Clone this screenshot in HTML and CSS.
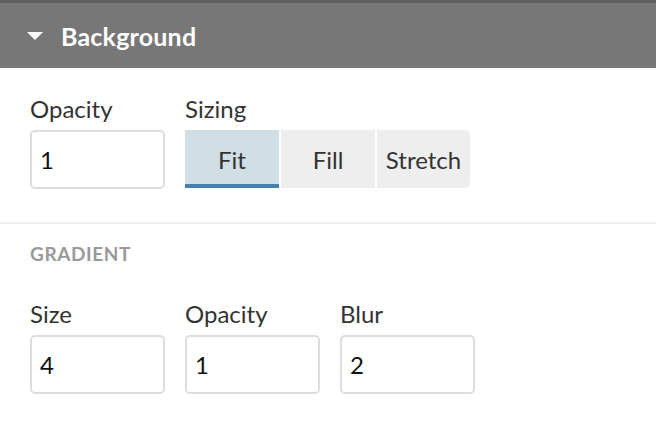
FILE: index.html
```html
<!DOCTYPE html>
<html>
<head>
<meta charset="utf-8">
<link rel="stylesheet" href="styles.css">
</head>
<body>
<div class="panel">
  <div class="header">
    <svg class="caret" width="16" height="8" viewBox="0 0 16 8"><polygon points="0,0 16,0 8,8" fill="#fff"/></svg>
    <span class="title">Background</span>
  </div>
  <div class="section first">
    <div class="row">
      <div class="field">
        <div class="label">Opacity</div>
        <div class="input">1</div>
      </div>
      <div class="field">
        <div class="label">Sizing</div>
        <div class="segments">
          <div class="seg active">Fit</div>
          <div class="seg">Fill</div>
          <div class="seg last">Stretch</div>
        </div>
      </div>
    </div>
  </div>
  <div class="section second">
    <div class="heading">GRADIENT</div>
    <div class="row">
      <div class="field">
        <div class="label">Size</div>
        <div class="input">4</div>
      </div>
      <div class="field">
        <div class="label">Opacity</div>
        <div class="input">1</div>
      </div>
      <div class="field">
        <div class="label">Blur</div>
        <div class="input">2</div>
      </div>
    </div>
  </div>
</div>
</body>
</html>
```
FILE: styles.css
```css
html, body {
  margin: 0;
  padding: 0;
  background: #fff;
}
body {
  font-family: Lato, "Liberation Sans", sans-serif;
  color: #333;
  width: 656px;
  height: 426px;
  overflow: hidden;
}
.header {
  height: 65px;
  border-top: 3px solid #606060;
  background: #777777;
  display: flex;
  align-items: center;
  padding-left: 27px;
  gap: 18px;
}
.caret {
  display: block;
  margin-top: 1px;
}
.title {
  color: #fff;
  font-weight: 700;
  font-size: 25px;
  letter-spacing: 0.2px;
}
.section {
  padding: 0 30px;
}
.section.first {
  padding-top: 26px;
  padding-bottom: 33px;
  border-bottom: 2px solid #eeeeee;
}
.section.second {
  padding-top: 18px;
}
.heading {
  font-size: 19px;
  font-weight: 700;
  color: #999;
  letter-spacing: 0.6px;
  line-height: 24px;
  margin-bottom: 33px;
}
.row {
  display: flex;
  gap: 20px;
}
.field {
  display: flex;
  flex-direction: column;
}
.label {
  font-size: 24px;
  line-height: 30px;
  margin-bottom: 6px;
  color: #333;
}
.input {
  box-sizing: border-box;
  width: 135px;
  height: 59px;
  border: 2px solid #dddddd;
  border-radius: 5px;
  font-size: 24px;
  line-height: 55px;
  padding-left: 8px;
  color: #111;
}
.segments {
  display: flex;
  gap: 2px;
  height: 58px;
}
.seg {
  box-sizing: border-box;
  width: 94px;
  background: #eeeeee;
  font-size: 24px;
  display: flex;
  align-items: center;
  justify-content: center;
  color: #333;
}
.seg.active {
  background: #d0dee6;
  border-bottom: 4px solid #4682ae;
  padding-top: 4px;
}
.seg.last {
  width: 93px;
  border-radius: 0 5px 5px 0;
}
```
